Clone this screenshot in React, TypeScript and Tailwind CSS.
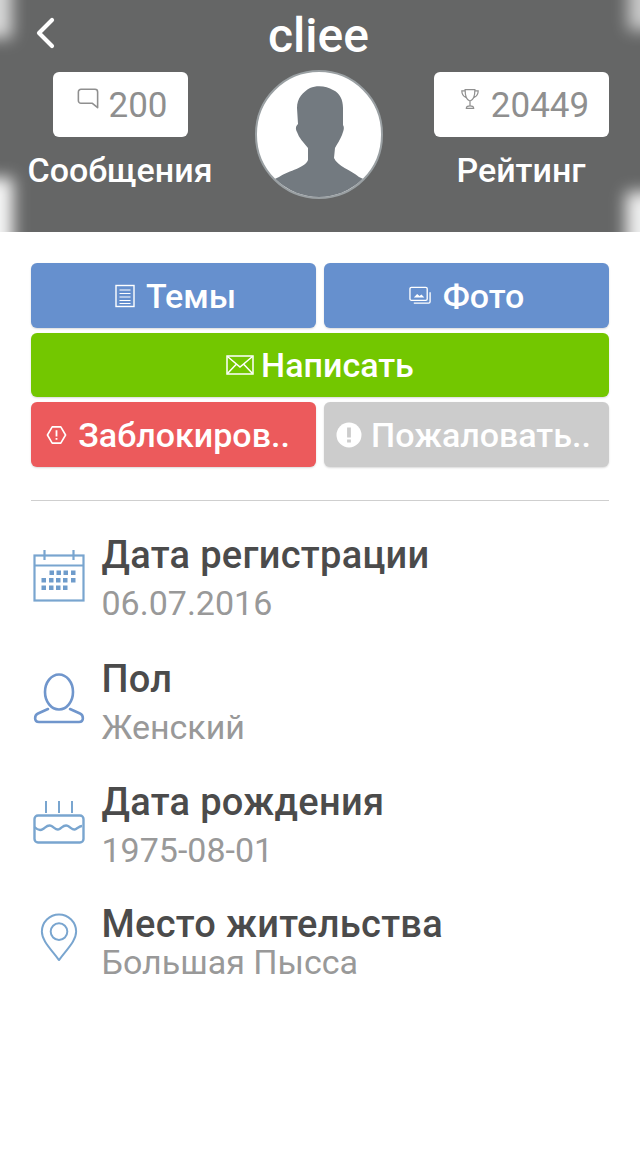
import React from "react";

const Doc = () => (
  <svg width="20" height="24" viewBox="0 0 20 24" fill="none" stroke="#fff" strokeWidth="1.4">
    <rect x="1" y="1.5" width="18" height="21" />
    <path d="M4.500 6h11M4.500 9.500h11M4.500 13h11M4.500 16.500h11M4.500 19.500h11" strokeWidth="1.2" />
  </svg>
);
const Photos = () => (
  <svg width="23" height="20" viewBox="0 0 24 20" fill="none" stroke="#fff" strokeWidth="1.4">
    <rect x="1" y="1" width="18" height="13.500" rx="1.500" />
    <path d="M5 17.500h15.500a1.500 1.500 0 0 0 1.500-1.500V6" />
    <path d="M5 11.500l3.500-3.500 2.500 2 2-1.500 3 3z" fill="#fff" stroke="none" />
  </svg>
);
const Mail = () => (
  <svg width="28" height="20" viewBox="0 0 28 20" fill="none" stroke="#fff" strokeWidth="1.500">
    <rect x="1" y="1" width="26" height="18" />
    <path d="M1.500 1.500L14 12 26.500 1.500M1.500 18.500l9-9.500M26.500 18.500l-9-9.500" />
  </svg>
);
const Hex = () => (
  <svg width="21" height="20" viewBox="0 0 22 20" fill="none" stroke="#fff" strokeWidth="1.700">
    <path d="M6.500 1.500h9L20.500 10l-5 8.500h-9L1.500 10z" strokeLinejoin="round" />
    <path d="M11 5v6.500M11 13.200v1.800" strokeWidth="1.900" />
  </svg>
);
const Alert = () => (
  <svg width="26" height="26" viewBox="0 0 26 26">
    <circle cx="13" cy="13" r="12.500" fill="#fff" />
    <path d="M13 5.500v10M13 17.600v3" stroke="#cccccc" strokeWidth="3.800" />
  </svg>
);
const Calendar = () => (
  <svg width="52" height="52" viewBox="0 0 52 52" fill="none" stroke="#79a5cf" strokeWidth="2.200">
    <rect x="1.500" y="5.500" width="49" height="45" />
    <path d="M1.500 15.500h49M11.500 0v10M40.500 0v10" />
    <g fill="#6f9ccb" stroke="none">
      <rect x="16.500" y="20.500" width="4.500" height="4.500" /><rect x="23.500" y="20.500" width="4.500" height="4.500" /><rect x="30.500" y="20.500" width="4.500" height="4.500" /><rect x="38" y="20.500" width="4.500" height="4.500" />
      <rect x="8.500" y="28" width="4.500" height="4.500" /><rect x="16" y="28" width="4.500" height="4.500" /><rect x="23" y="28" width="4.500" height="4.500" /><rect x="30" y="28" width="4.500" height="4.500" /><rect x="38" y="28" width="4.500" height="4.500" />
      <rect x="8.500" y="35.500" width="4.500" height="4.500" /><rect x="16" y="35.500" width="4.500" height="4.500" /><rect x="23" y="35.500" width="4.500" height="4.500" /><rect x="30" y="35.500" width="4.500" height="4.500" />
    </g>
  </svg>
);
const Person = () => (
  <svg width="52" height="52" viewBox="0 0 52 52" fill="none" stroke="#7096cc" strokeWidth="2.600">
    <ellipse cx="26" cy="19" rx="14" ry="17.500" />
    <path d="M15 36L5 40.500c-3.500 1.500-4.500 8.500 1 8.500h40c5.500 0 4.500-7 1-8.500L37 36" strokeLinecap="round" />
  </svg>
);
const Cake = () => (
  <svg width="52" height="44" viewBox="0 0 52 44" fill="none" stroke="#79a5cf" strokeWidth="2.400">
    <path d="M13 1v12M26 1v12M39 1v12" strokeWidth="2" />
    <rect x="1.500" y="15.500" width="49" height="27" rx="3.500" />
    <path d="M1.500 27c3 3 5.500 4 8.500 2s5-5 8.500-3 5 5 8 3 5-5 8.500-3 5 5 8 3 4-3 6-3" />
  </svg>
);
const Pin = () => (
  <svg width="38" height="49" viewBox="0 0 38 50" fill="none" stroke="#79a5cf" strokeWidth="2">
    <path d="M19 48C10 36 1.500 28 1.500 19a17.500 17.500 0 0 1 35 0C36.500 28 28 36 19 48z" strokeLinejoin="round" />
    <circle cx="19" cy="19" r="8.500" />
  </svg>
);

const Btn = ({ cls, children }: { cls: string; children: React.ReactNode }) => (
  <div className={`h-[64.5px] rounded-[6px] flex items-center justify-center text-white font-medium text-[34px] leading-none whitespace-nowrap shadow-[0_1px_2px_rgba(0,0,0,0.15)] ${cls}`}>
    {children}
  </div>
);

const Row = ({ icon, title, value, cls, iconCls }: { icon: React.ReactNode; title: string; value: string; cls: string; iconCls: string }) => (
  <div className={`flex ${cls}`}>
    <div className={`w-[70.500px] shrink-0 ${iconCls}`}>{icon}</div>
    <div>
      <div className="text-[38px] leading-[48px] font-medium tracking-[0.3px] text-[#4b4b4b]">{title}</div>
      <div className="text-[34px] leading-[48px] text-[#999999]">{value}</div>
    </div>
  </div>
);

export default function App() {
  return (
    <div className="w-[640px] h-[1163px] bg-white overflow-hidden font-['Roboto',sans-serif]">
      <header className="relative h-[232px] bg-[#656666] overflow-hidden text-white">
        <div className="absolute left-[-18px] top-[-20px] w-[30px] h-[58px] bg-white blur-[8px] opacity-75" />
        <div className="absolute left-[-18px] top-[178px] w-[31px] h-[80px] bg-white blur-[8px] opacity-95" />
        <div className="absolute right-[-18px] top-[-20px] w-[30px] h-[50px] bg-white blur-[8px] opacity-65" />
        <div className="absolute right-[-18px] top-[192px] w-[32px] h-[60px] bg-white blur-[8px] opacity-90" />
        <svg className="absolute left-[34px] top-[15px]" width="24" height="36" viewBox="0 0 24 36" fill="none" stroke="#fff" strokeWidth="4.200" strokeLinecap="round" strokeLinejoin="round">
          <path d="M18 5L5 18l13 13" />
        </svg>
        <div className="relative h-[70px] flex items-center justify-center text-[48px] leading-none font-medium pr-[3px] pt-[2px]">cliee</div>
        <div className="relative flex">
          <div className="w-[240px] flex flex-col items-center">
            <div className="mt-[2px] w-[135px] h-[65px] bg-white rounded-[6px] flex items-center justify-center gap-[9px] text-[#8f8f8f] text-[35px] leading-none pt-[1px] pl-[5px]">
              <svg className="mb-[14px]" width="22" height="21" viewBox="0 0 24 24" fill="none" stroke="#8f8f8f" strokeWidth="1.800" strokeLinejoin="round">
                <path d="M4 1.500h16a3 3 0 0 1 3 3V22.500l-6-5H4a3 3 0 0 1-3-3v-10a3 3 0 0 1 3-3z" />
              </svg>
              <span>200</span>
            </div>
            <div className="mt-[13px] text-[34px] leading-[40px] font-medium">Сообщения</div>
          </div>
          <div className="ml-[15px] w-[128px] h-[129px] rounded-full border-2 border-[#9aa0a3] bg-white overflow-hidden shrink-0">
            <svg width="124" height="125" viewBox="2 2 124 125" fill="#737a80">
              <path d="M55 18C62 15 72 16 78 20C85 23 88 30 88 38L88 55C90 58 88 62 87 65C85 70 82 74 80 78L79 88C82 96 96 100 104 107L128 118L128 129L0 129L0 118L24 107C35 100 50 98 53 90L53 78C48 72 44 68 42 62C40 58 41 56 43 54L42 38C42 28 48 22 55 18Z" />
            </svg>
          </div>
          <div className="ml-[19px] w-[238px] flex flex-col items-center">
            <div className="mt-[2px] w-[175px] h-[65px] bg-white rounded-[6px] flex items-center justify-center gap-[12px] text-[#8f8f8f] text-[35px] leading-none pt-[1px] pl-[8px]">
              <svg className="mb-[12px]" width="18" height="22" viewBox="0 0 22 26" fill="none" stroke="#8f8f8f" strokeWidth="1.500">
                <path d="M5 1.500h12c0 8-1 13-6 14-5-1-6-6-6-14zM5 3H1c0 5 2 7 5 8M17 3h4c0 5-2 7-5 8M11 15.500V22M6.500 24.500c0-2 2-3 4.500-3s4.500 1 4.500 3z" />
              </svg>
              <span>20449</span>
            </div>
            <div className="mt-[13px] text-[34px] leading-[40px] font-medium">Рейтинг</div>
          </div>
        </div>
      </header>

      <div className="px-[31px] pt-[31px]">
        <div className="flex flex-col gap-[5px]">
          <div className="grid grid-cols-2 gap-[8px]">
            <Btn cls="min-w-0 bg-[#6690ce] gap-[11px] pl-[4px] pt-[1px]"><Doc /><span>Темы</span></Btn>
            <Btn cls="min-w-0 bg-[#6690ce] gap-[11px] pt-[1px]"><Photos /><span>Фото</span></Btn>
          </div>
          <Btn cls="bg-[#73c700] gap-[7px] pt-[1px]"><Mail /><span>Написать</span></Btn>
          <div className="grid grid-cols-2 gap-[8px]">
            <Btn cls="min-w-0 bg-[#ec5a5c] gap-[11px] pr-[11px] pt-[1px]"><Hex /><span>Заблокиров..</span></Btn>
            <Btn cls="min-w-0 bg-[#cccccc] gap-[9px] pr-[6px] pt-[1px]"><Alert /><span>Пожаловать..</span></Btn>
          </div>
        </div>
        <div className="mt-[33px] h-[1px] bg-[#cfcfcf]" />
        <div className="pt-[30.500px]">
          <Row cls="h-[123.500px]" iconCls="pt-[19px] pl-[2px]" icon={<Calendar />} title="Дата регистрации" value="06.07.2016" />
          <Row cls="h-[123.500px]" iconCls="pt-[18px] pl-[2px]" icon={<Person />} title="Пол" value="Женский" />
          <Row cls="h-[123px]" iconCls="pt-[22px] pl-[2px]" icon={<Cake />} title="Дата рождения" value="1975-08-01" />
          <div className="flex">
            <div className="w-[70.500px] shrink-0 pt-[12px] pl-[9px]"><Pin /></div>
            <div>
              <div className="text-[38px] leading-[46px] font-medium tracking-[0.3px] text-[#4b4b4b]">Место жительства</div>
              <div className="text-[34px] leading-[30px] text-[#999999]">Большая Пысса</div>
            </div>
          </div>
        </div>
      </div>
    </div>
  );
}
